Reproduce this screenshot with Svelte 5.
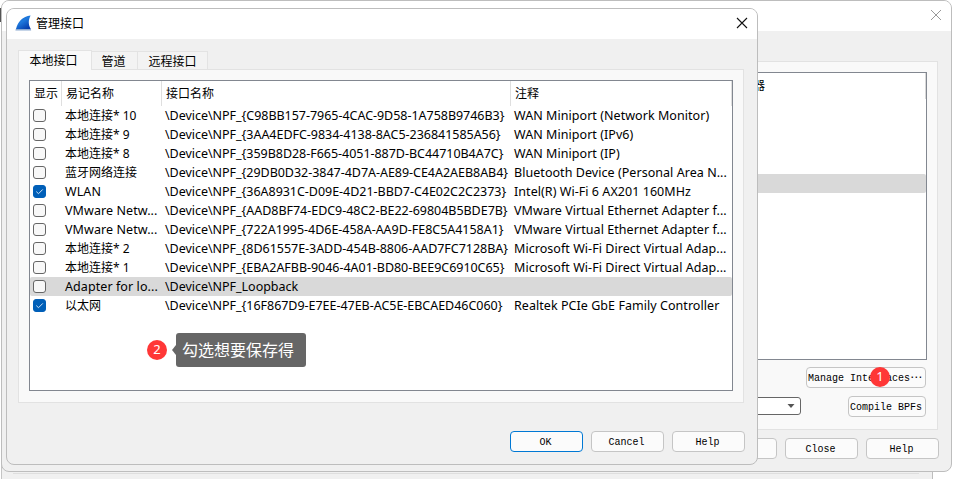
<script>
  const rows = [
    { name: '本地连接* 10', cjk: true, device: '\\Device\\NPF_{C98BB157-7965-4CAC-9D58-1A758B9746B3}', note: 'WAN Miniport (Network Monitor)' },
    { name: '本地连接* 9', cjk: true, device: '\\Device\\NPF_{3AA4EDFC-9834-4138-8AC5-236841585A56}', note: 'WAN Miniport (IPv6)' },
    { name: '本地连接* 8', cjk: true, device: '\\Device\\NPF_{359B8D28-F665-4051-887D-BC44710B4A7C}', note: 'WAN Miniport (IP)' },
    { name: '蓝牙网络连接', cjk: true, device: '\\Device\\NPF_{29DB0D32-3847-4D7A-AE89-CE4A2AEB8AB4}', note: 'Bluetooth Device (Personal Area N...' },
    { name: 'WLAN', device: '\\Device\\NPF_{36A8931C-D09E-4D21-BBD7-C4E02C2C2373}', note: 'Intel(R) Wi-Fi 6 AX201 160MHz', checked: true },
    { name: 'VMware Netw...', device: '\\Device\\NPF_{AAD8BF74-EDC9-48C2-BE22-69804B5BDE7B}', note: 'VMware Virtual Ethernet Adapter f...' },
    { name: 'VMware Netw...', device: '\\Device\\NPF_{722A1995-4D6E-458A-AA9D-FE8C5A4158A1}', note: 'VMware Virtual Ethernet Adapter f...' },
    { name: '本地连接* 2', cjk: true, device: '\\Device\\NPF_{8D61557E-3ADD-454B-8806-AAD7FC7128BA}', note: 'Microsoft Wi-Fi Direct Virtual Adap...' },
    { name: '本地连接* 1', cjk: true, device: '\\Device\\NPF_{EBA2AFBB-9046-4A01-BD80-BEE9C6910C65}', note: 'Microsoft Wi-Fi Direct Virtual Adap...' },
    { name: 'Adapter for lo...', device: '\\Device\\NPF_Loopback', note: '', selected: true },
    { name: '以太网', cjk: true, device: '\\Device\\NPF_{16F867D9-E7EE-47EB-AC5E-EBCAED46C060}', note: 'Realtek PCIe GbE Family Controller', checked: true }
  ];
</script>

<div class="desktop">
  <div class="base"><div class="base-panel"></div></div>
  <div class="shade"></div>

  <section class="window back">
    <header class="title back-title">
      <svg class="close" width="12" height="12" viewBox="0 0 12 12"><path d="M1 1 11 11M11 1 1 11" stroke="#999" fill="none" /></svg>
    </header>
    <div class="back-panel">
      <div class="back-list">
        <div class="back-head"><span>器</span></div>
        <div class="back-selected"></div>
      </div>
      <div class="line manage"><button>Manage Interfaces<i>⋯</i></button></div>
      <div class="line compile">
        <div class="combo"><svg width="8" height="4" viewBox="0 0 8 4"><path d="M0.5 0H7.5L4 4Z" fill="#555" /></svg></div>
        <button>Compile BPFs</button>
      </div>
    </div>
    <footer><button></button><button>Close</button><button>Help</button></footer>
  </section>

  <section class="window front">
    <header class="title front-title">
      <svg class="fin" width="17" height="17" viewBox="0 0 17 17">
        <defs><linearGradient id="fin" x1="0" y1="0" x2=".7" y2="1"><stop offset="0" stop-color="#1b6fd0" /><stop offset=".5" stop-color="#1e78dc" /><stop offset="1" stop-color="#063fae" /></linearGradient></defs>
        <path d="M1 14C3 6.5 7.5 1.6 15.6 .6C13.2 5 13.2 10 15.8 14Z" fill="url(#fin)" />
        <path d="M.8 14H15.8L16.2 15.6H.4Z" fill="#8dabd2" />
      </svg>
      <h1>管理接口</h1>
      <svg class="close" width="12" height="12" viewBox="0 0 12 12"><path d="M1 1 11 11M11 1 1 11" stroke="#111" stroke-width="1.1" fill="none" /></svg>
    </header>
    <nav><span class="tab active">本地接口</span><span class="tab pipe">管道</span><span class="tab remote">远程接口</span></nav>
    <div class="panel">
      <div class="table">
        <div class="row head"><span>显示</span><span>易记名称</span><span>接口名称</span><span>注释</span></div>
        {#each rows as row}
          <div class="row" class:selected={row.selected}>
            <span class="cell-check">
              <i class="check" class:checked={row.checked}>
                {#if row.checked}<svg width="13" height="13" viewBox="0 0 13 13"><path d="M3.3 6.6 5.5 8.7 9.8 4.4" stroke="#cfe2f5" fill="none" /></svg>{/if}
              </i>
            </span>
            <span class="name" class:cjk={row.cjk}>{row.name}</span><span class="device">{row.device}</span><span class="note">{row.note}</span>
          </div>
        {/each}
      </div>
    </div>
    <footer><button class="primary">OK</button><button>Cancel</button><button>Help</button></footer>
  </section>

  <b class="badge one">1</b>
  <b class="badge two">2</b>
  <div class="tip">勾选想要保存得</div>
</div>

<style>
  * { box-sizing: border-box; }
  .desktop { position: relative; width: 953px; height: 479px; overflow: hidden; background: #fff; color: #000; font: 12.5px/19px "Noto Sans", "Noto Sans CJK SC", sans-serif; }
  .base { position: absolute; left: 1px; top: 464px; width: 932px; height: 15px; background: #f0f0f0; border-left: 1px solid #c4c4c4; border-right: 1px solid #bdbdbd; padding: 9px 13px 0 11px; }
  .base-panel { height: 1px; border-top: 1px solid #dedede; }
  .shade { position: absolute; left: 0; top: 8px; width: 1px; height: 14px; background: #555; }
  .window { position: absolute; display: flex; flex-direction: column; background: #f0f0f0; border: 1px solid #bdbdbd; border-radius: 8px; overflow: hidden; }
  .back { left: 1px; top: 0; width: 951px; height: 472px; }
  .front { left: 6px; top: 8px; width: 752px; height: 457px; }
  .title { flex: none; display: flex; align-items: center; background: #fff; }
  .back-title { height: 30px; padding: 0 9px 2px 0; }
  .front-title { height: 30px; padding: 0 9px 2px 8px; }
  .close { margin-left: auto; }
  h1 { margin: 0 0 0 4px; font: 12px/18px "Noto Sans CJK SC", sans-serif; }
  .back-panel { width: 924px; height: 369px; margin: 30px 0 0 12px; flex: none; border: 1px solid #e2e2e2; background: #f9f9f9; padding: 10px 10px 0; }
  .back-list { height: 288px; border: 1px solid #828790; background: #fff; }
  .back-head { height: 26px; padding-left: 727px; border-right: 1px solid #d8d8d8; font: 12px/24px "Noto Sans CJK SC", sans-serif; }
  .back-selected { height: 19px; margin-top: 75px; background: #d9d9d9; border-radius: 2px; }
  .line { display: flex; justify-content: flex-end; }
  .manage { margin-top: 7px; padding-right: 1px; }
  .compile { margin-top: 8px; padding-right: 1px; gap: 47px; }
  .combo { width: 200px; height: 18px; margin-top: 1px; border: 1px solid #666; border-radius: 3px; background: #fff; display: flex; align-items: center; justify-content: flex-end; padding-right: 5px; }
  button { height: 21px; padding: 3px 2px 0 0; border: 1px solid #c5c5c5; border-radius: 4px; background: #fbfbfb; color: #000; font: 10px/16px "Liberation Mono", monospace; flex: none; white-space: nowrap; }
  .manage button { width: 120px; }
  button i { font: 12px/12px "DejaVu Sans", sans-serif; }
  .compile button { width: 78px; }
  footer { display: flex; justify-content: flex-end; gap: 8px; }
  footer button { width: 73px; }
  .back footer { margin-top: 8px; padding-right: 12px; }
  .front footer { margin-top: 28px; padding-right: 12px; }
  footer .primary { border-color: #0078d4; }
  nav { display: flex; align-items: flex-end; height: 30px; padding-left: 11px; flex: none; position: relative; z-index: 1; }
  .tab { height: 18px; border: 1px solid #e3e3e3; border-left: 0; border-bottom: 0; background: #f3f3f3; text-align: center; font: 12px/18px "Noto Sans CJK SC", sans-serif; }
  .tab.active { width: 74px; height: 20px; margin-bottom: -1px; border-left: 1px solid #e3e3e3; background: #f9f9f9; line-height: 18px; padding-right: 3px; }
  .pipe { width: 46px; padding-right: 2px; }
  .remote { width: 70px; }
  .panel { width: 726px; height: 334px; margin-left: 11px; flex: none; border: 1px solid #e2e2e2; background: #f9f9f9; padding: 10px; }
  .table { width: 704px; height: 311px; border: 1px solid #828790; background: #fff; }
  .row { display: grid; grid-template-columns: 32px 100px 349px 1fr; height: 19px; white-space: nowrap; }
  .row > span { padding-left: 3px; }
  .head { height: 25px; font: 12px/24px "Noto Sans CJK SC", sans-serif; }
  .head > span { border-right: 1px solid #dfdfdf; padding-left: 4px; }
  .selected { background: #d9d9d9; border-radius: 2px; }
  .cjk { font-size: 12px; }
  .name:not(.cjk) { letter-spacing: .08px; }
  .device { letter-spacing: -.03px; }
  .note { letter-spacing: .05px; }
  .cell-check { display: flex; align-items: center; }
  .check { width: 13px; height: 13px; display: block; border: 1px solid #666; border-radius: 3px; background: #f8f8f8; }
  .check.checked { background: #005fb8; border-color: #005fb8; }
  .check svg { display: block; margin: -1px; }
  .badge { position: absolute; width: 20px; height: 20px; border-radius: 50%; background: #ff3737; color: #fff; text-align: center; font: 13px/19px "Noto Sans", sans-serif; }
  .one { left: 870px; top: 367px; }
  .two { left: 147px; top: 340px; }
  .tip { position: absolute; left: 176px; top: 333px; width: 130px; height: 34px; padding-left: 6px; border-radius: 3px; background: #666; color: #fff; font: 16px/33px "Noto Sans CJK SC", sans-serif; }
  .tip::before { content: ""; position: absolute; left: -4px; top: 12px; border: 5px solid transparent; border-left: 0; border-right: 4px solid #666; }
</style>
